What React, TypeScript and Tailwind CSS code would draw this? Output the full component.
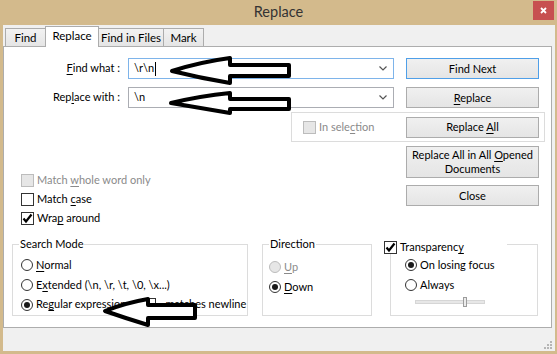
import type { ReactNode } from 'react';

function U({ children }: { children: ReactNode }) {
  return <span className="underline underline-offset-[2px]">{children}</span>;
}

function Check({ checked, disabled }: { checked?: boolean; disabled?: boolean }) {
  return (
    <span
      className={`w-[13px] h-[13px] shrink-0 flex items-center justify-center border ${
        disabled ? 'border-[#bcbcbc] bg-[#e6e6e6]' : 'border-[#333333] bg-white'
      }`}
    >
      {checked && (
        <svg width="11" height="11" viewBox="0 0 11 11">
          <path d="M1.5 5.5 L4 8.5 L9.5 1.5" fill="none" stroke="#000" strokeWidth="2.2" />
        </svg>
      )}
    </span>
  );
}

function Radio({ checked, disabled }: { checked?: boolean; disabled?: boolean }) {
  return (
    <span
      className={`w-[12px] h-[12px] shrink-0 rounded-full flex items-center justify-center border ${
        disabled ? 'border-[#bcbcbc] bg-[#e6e6e6]' : 'border-[#333333] bg-white'
      }`}
    >
      {checked && <span className="w-[6px] h-[6px] rounded-full bg-[#1a1a1a]" />}
    </span>
  );
}

function Btn({ children, primary, h = 'h-[21px]' }: { children: ReactNode; primary?: boolean; h?: string }) {
  return (
    <div
      className={`w-[133px] ${h} shrink-0 flex items-center justify-center text-center leading-[14px] border bg-linear-to-b from-[#f0f0f0] to-[#e5e5e5] ${
        primary ? 'border-[#4f9fe8]' : 'border-[#acacac]'
      }`}
    >
      {children}
    </div>
  );
}

function Combo({ value, focused }: { value: string; focused?: boolean }) {
  return (
    <div
      className={`ml-[8px] w-[266px] h-[21px] flex items-center bg-white border ${
        focused ? 'border-[#7eb4ea]' : 'border-[#abadb3]'
      }`}
    >
      <span className="pl-[5px]">{value}</span>
      {focused && <span className="ml-[1px] w-px h-[14px] bg-black" />}
      <svg className="ml-auto mr-[6px]" width="8" height="5" viewBox="0 0 8 5">
        <path d="M0.5 0.5 L4 4 L7.5 0.5" fill="none" stroke="#555" strokeWidth="1.2" />
      </svg>
    </div>
  );
}

function Group({ title, className, children }: { title: ReactNode; className: string; children: ReactNode }) {
  return (
    <div className={`relative shrink-0 h-[72px] border border-[#dcdcdc] ${className}`}>
      <span className="absolute top-[-8px] left-[6px] px-[1px] bg-white leading-[14px]">{title}</span>
      {children}
    </div>
  );
}

function Tab({ label, active, w }: { label: string; active?: boolean; w: string }) {
  return active ? (
    <div className={`${w} h-[21px] -ml-px mb-[-1px] relative z-10 flex items-center justify-center pb-[2px] bg-white border border-b-0 border-[#acacac]`}>
      {label}
    </div>
  ) : (
    <div className={`${w} h-[18px] -ml-px flex items-center justify-center bg-linear-to-b from-[#f2f2f2] to-[#e5e5e5] border border-b-0 border-[#acacac]`}>
      {label}
    </div>
  );
}

export default function App() {
  return (
    <div className="relative w-[557px] h-[354px] overflow-hidden bg-[#d3ba8c] flex flex-col font-['Lato',sans-serif] text-[11px] whitespace-nowrap text-black">
      {/* title bar */}
      <div className="h-[25px] shrink-0 relative flex items-center justify-center">
        <span className="text-[14.5px] text-[#333333] pb-[1px]">Replace</span>
        <div className="absolute right-[3px] top-[1px] w-[21px] h-[19px] bg-[#c75050] flex items-center justify-center">
          <svg width="7" height="7" viewBox="0 0 7 7">
            <path d="M1 1 L6 6 M6 1 L1 6" stroke="#fff" strokeWidth="1.8" />
          </svg>
        </div>
      </div>

      {/* body */}
      <div className="flex-1 ml-[3px] mr-[2px] mb-[3px] bg-[#f0f0f0] flex flex-col">
        <div className="h-[21px] shrink-0 flex items-end pl-[3px] text-[11.5px]">
          <Tab label="Find" w="w-[41px]" />
          <Tab label="Replace" active w="w-[54px]" />
          <Tab label="Find in Files" w="w-[66px]" />
          <Tab label="Mark" w="w-[41px]" />
        </div>

        <div className="w-[549px] h-[282px] shrink-0 bg-white border border-[#adadad] flex flex-col">
          {/* find what */}
          <div className="mt-[11px] h-[21px] flex items-center">
            <span className="w-[116px] text-right">
              <U>F</U>ind what :
            </span>
            <Combo value="\r\n" focused />
            <div className="ml-[12px]">
              <Btn primary>Find Next</Btn>
            </div>
          </div>
          {/* replace with */}
          <div className="mt-[8px] h-[21px] flex items-center">
            <span className="w-[116px] text-right">
              Rep<U>l</U>ace with :
            </span>
            <Combo value="\n" />
            <div className="ml-[12px]">
              <Btn>
                <span>
                  <U>R</U>eplace
                </span>
              </Btn>
            </div>
          </div>
          {/* in selection */}
          <div className="mt-[4px] ml-[287px] w-[254px] h-[30px] shrink-0 border border-[#dcdcdc] flex items-center">
            <span className="ml-[11px]">
              <Check disabled />
            </span>
            <span className="ml-[3px] text-[#8a8a8a]">
              In sele<U>c</U>tion
            </span>
            <div className="ml-auto mr-[5px]">
              <Btn>
                <span>
                  Replace <U>A</U>ll
                </span>
              </Btn>
            </div>
          </div>
          {/* options + more buttons */}
          <div className="mt-[4px] flex items-start">
            <div className="w-[402px] pl-[17px] pt-[28px] flex flex-col gap-[6px]">
              <div className="h-[13px] flex items-center">
                <Check disabled />
                <span className="ml-[3px] text-[#8a8a8a]">
                  Match <U>w</U>hole word only
                </span>
              </div>
              <div className="h-[13px] flex items-center">
                <Check />
                <span className="ml-[3px]">
                  Match <U>c</U>ase
                </span>
              </div>
              <div className="h-[13px] flex items-center">
                <Check checked />
                <span className="ml-[3px]">
                  Wra<U>p</U> around
                </span>
              </div>
            </div>
            <div className="flex flex-col gap-[7px]">
              <Btn h="h-[32px]">
                <span>
                  Replace All in All <U>O</U>pened
                  <br />
                  Documents
                </span>
              </Btn>
              <Btn>Close</Btn>
            </div>
          </div>
          {/* group boxes */}
          <div className="mt-[19px] flex items-start">
            <Group title="Search Mode" className="ml-[8px] w-[236px]">
              <div className="pt-[10px] pl-[8px] flex flex-col">
                <div className="h-[20px] flex items-center">
                  <Radio />
                  <span className="ml-[3px]">
                    <U>N</U>ormal
                  </span>
                </div>
                <div className="h-[20px] flex items-center">
                  <Radio />
                  <span className="ml-[3px]">
                    E<U>x</U>tended (\n, \r, \t, \0, \x...)
                  </span>
                </div>
                <div className="h-[19px] flex items-center">
                  <div className="w-[122px] flex items-center">
                    <Radio checked />
                    <span className="ml-[3px]">
                      Re<U>g</U>ular expression
                    </span>
                  </div>
                  <Check />
                  <span className="ml-[4px]">
                    <U>.</U> matches newline
                  </span>
                </div>
              </div>
            </Group>
            <Group title="Direction" className="ml-[14px] w-[110px]">
              <div className="pt-[12px] pl-[6px] flex flex-col">
                <div className="h-[20px] flex items-center">
                  <Radio disabled />
                  <span className="ml-[3px] text-[#8a8a8a]">
                    <U>U</U>p
                  </span>
                </div>
                <div className="h-[20px] flex items-center">
                  <Radio checked />
                  <span className="ml-[3px]">
                    <U>D</U>own
                  </span>
                </div>
              </div>
            </Group>
            <div className="relative shrink-0 ml-[18px] w-[148px] h-[72px] border border-[#dcdcdc]">
              <div className="absolute top-[-4px] left-[-7px] w-[123px] h-[13px] bg-white flex items-center">
                <Check checked />
                <span className="ml-[3px]">
                  Transparenc<U>y</U>
                </span>
              </div>
              <div className="pt-[10px] pl-[14px] flex flex-col">
                <div className="h-[20px] flex items-center">
                  <Radio checked />
                  <span className="ml-[3px]">On losing focus</span>
                </div>
                <div className="h-[20px] flex items-center">
                  <Radio />
                  <span className="ml-[3px]">Always</span>
                </div>
              </div>
              <div className="relative mt-[5px] ml-[24px] w-[70px] h-[4px] bg-[#e7e7e7] border border-[#d6d6d6]">
                <div className="absolute left-[47px] top-[-4px] w-[4px] h-[10px] bg-[#ececec] border border-[#9c9c9c]" />
              </div>
            </div>
          </div>
        </div>

        {/* bottom strip with grip */}
        <div className="flex-1 flex justify-end items-end pr-[3px] pb-[2px]">
          <svg width="8" height="8" viewBox="0 0 8 8">
            <rect x="6" y="0" width="2" height="2" fill="#b5b5b5" />
            <rect x="3" y="3" width="2" height="2" fill="#b5b5b5" />
            <rect x="6" y="3" width="2" height="2" fill="#b5b5b5" />
            <rect x="0" y="6" width="2" height="2" fill="#b5b5b5" />
            <rect x="3" y="6" width="2" height="2" fill="#b5b5b5" />
            <rect x="6" y="6" width="2" height="2" fill="#b5b5b5" />
          </svg>
        </div>
      </div>

      {/* hand-drawn arrows over the dialog */}
      <svg className="absolute inset-0 pointer-events-none" width="557" height="354" viewBox="0 0 557 354">
        <g fill="#fff" stroke="#000" strokeWidth="4" strokeLinejoin="round">
          <path d="M172 71 Q200 62 230 58 L230 65 L289 65 L289 76 L230 76 L230 83 Q200 78 172 71 Z" />
          <path d="M171 103 Q200 96 230 93 L230 99 L289 99 L289 109 L230 109 L230 113 Q200 108 171 103 Z" />
          <path d="M105 311 Q125 303 148 299 L148 305 L195 305 L195 318 L148 318 L148 325 Q125 318 105 311 Z" />
        </g>
      </svg>
    </div>
  );
}
